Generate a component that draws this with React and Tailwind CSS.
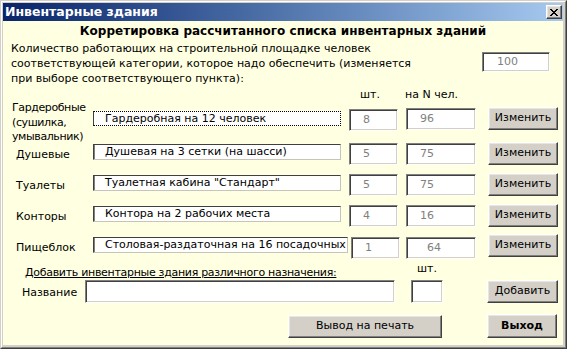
import React from "react";

const sunken =
  "bg-white border border-t-[#808080] border-l-[#808080] border-r-white border-b-white shadow-[inset_1px_1px_0_#404040,inset_-1px_-1px_0_#d4d0c8]";
const raised =
  "bg-[#d4d0c8] border border-t-white border-l-white border-r-[#404040] border-b-[#404040] shadow-[inset_-1px_-1px_0_#808080,inset_1px_1px_0_#e8e6e1] flex items-center justify-center text-black";
const combo =
  "bg-white border border-t-[#404040] border-l-[#404040] border-r-[#c8c4bc] border-b-[#c8c4bc] shadow-[inset_1px_0_0_#808080] flex items-center whitespace-nowrap overflow-hidden leading-[14px]";

function Num({ v, pl = "pl-[13px]" }) {
  return (
    <div className={`${sunken} w-full h-full flex items-center ${pl} text-[#808080]`}>{v}</div>
  );
}

function Row({ label, text, n, total, top, comboW = "w-[248px]", last }) {
  return (
    <div className={`flex items-start h-[23px] ${top}`}>
      <div className="w-[90px] pl-[13px] mt-[5px] leading-[15px] shrink-0">{label}</div>
      <div className={`${combo} ${comboW} h-[16px] mt-[2px] pl-[11px] shrink-0`}>{text}</div>
      <div className={`${last ? "ml-[3px] mt-[2px]" : "ml-[8px] mt-[1px]"} w-[49px] h-[22px] shrink-0`}>
        <Num v={n} />
      </div>
      <div className={`${last ? "ml-[6px] mt-[2px]" : "ml-[8px] mt-[1px]"} w-[70px] h-[22px] shrink-0`}>
        <Num v={total} pl={last ? "pl-[20px]" : "pl-[13px]"} />
      </div>
      <div className={`${raised} ${last ? "ml-[12px] -mt-[1px]" : "ml-[12px]"} w-[70px] h-[23px] shrink-0`}>Изменить</div>
    </div>
  );
}

export default function App() {
  return (
    <div className="w-[567px] h-[349px] bg-[#d4d0c8] border border-t-[#d4d0c8] border-l-[#d4d0c8] border-r-[#404040] border-b-[#404040] font-['DejaVu_Sans',Verdana,sans-serif] text-[11px] text-black">
      <div className="h-full border border-t-white border-l-white border-r-[#808080] border-b-[#808080] pt-[1px] pl-[1px] pr-[2px] pb-[2px] flex flex-col">
        {/* Title bar */}
        <div className="h-[18px] shrink-0 flex items-center bg-gradient-to-r from-[#0a246a] to-[#a6caf0] pl-[2px] pr-[1px]">
          <span className="text-white font-bold text-[12.5px] leading-[14px] flex-1">Инвентарные здания</span>
          <div className={`${raised} w-[16px] h-[14px]`}>
            <svg width="8" height="7" viewBox="0 0 8 7" shapeRendering="crispEdges">
              <g fill="#000">
                <rect x="0" y="0" width="2" height="1" />
                <rect x="6" y="0" width="2" height="1" />
                <rect x="1" y="1" width="2" height="1" />
                <rect x="5" y="1" width="2" height="1" />
                <rect x="2" y="2" width="4" height="1" />
                <rect x="3" y="3" width="2" height="1" />
                <rect x="2" y="4" width="4" height="1" />
                <rect x="1" y="5" width="2" height="1" />
                <rect x="5" y="5" width="2" height="1" />
                <rect x="0" y="6" width="2" height="1" />
                <rect x="6" y="6" width="2" height="1" />
              </g>
            </svg>
          </div>
        </div>

        {/* Body */}
        <div className="flex-1 bg-[#ffffe1] flex flex-col">
          <div className="h-[20px] flex items-center justify-center font-bold text-[12px]">
            Корретировка рассчитанного списка инвентарных зданий
          </div>

          <div className="flex items-start">
            <div className="w-[479px] pl-[8px] leading-[15px] shrink-0">
              Количество работающих на строительной площадке человек
              <br />
              соответствующей категории, которое надо обеспечить (изменяется
              <br />
              при выборе соответствующего пункта):
            </div>
            <div className={`${sunken} w-[68px] h-[20px] mt-[11px] flex items-center pl-[14px] text-[#808080]`}>100</div>
          </div>

          <div className="flex h-[12px] leading-[12px] mt-[3px] pl-[357px]">
            <span className="w-[45px]">шт.</span>
            <span>на N чел.</span>
          </div>

          {/* Row 1 */}
          <div className="flex items-start h-[41px]">
            <div className="w-[90px] pl-[9px] leading-[14.5px] tracking-[-0.4px] shrink-0">
              Гардеробные
              <br />
              (сушилка,
              <br />
              умывальник)
            </div>
            <div className="bg-white border border-dotted border-black [border-left-style:solid] border-l-[#404040] w-[248px] h-[15px] mt-[10px] pl-[11px] flex items-center whitespace-nowrap overflow-hidden leading-[13px] shrink-0">
              Гардеробная на 12 человек
            </div>
            <div className="ml-[8px] mt-[8px] w-[49px] h-[22px] shrink-0">
              <Num v="8" />
            </div>
            <div className="ml-[8px] mt-[7px] w-[70px] h-[22px] shrink-0">
              <Num v="96" />
            </div>
            <div className={`${raised} ml-[12px] mt-[6px] w-[70px] h-[23px] shrink-0`}>Изменить</div>
          </div>

          <Row label="Душевые" text="Душевая на 3 сетки (на шасси)" n="5" total="75" top="mt-0" />
          <Row label="Туалеты" text={'Туалетная кабина "Стандарт"'} n="5" total="75" top="mt-[8px]" />
          <Row label="Конторы" text="Контора на 2 рабочих места" n="4" total="16" top="mt-[8px]" />
          <Row
            label="Пищеблок"
            text="Столовая-раздаточная на 16 посадочных"
            n="1"
            total="64"
            top="mt-[8px]"
            comboW="w-[255px]"
            last
          />

          <div className="flex items-start h-[19px] mt-[3px]">
            <div className="w-[412px] pl-[22px] mt-[4px] leading-[15px] tracking-[-0.3px] shrink-0">
              <span className="underline">Добавить инвентарные здания различного назначения:</span>
            </div>
            <span className="ml-[2px] leading-[15px]">шт.</span>
          </div>

          <div className="flex items-start h-[23px]">
            <div className="w-[82px] pl-[19px] mt-[5px] leading-[15px] shrink-0">Название</div>
            <div className={`${sunken} w-[310px] h-[23px] shrink-0`} />
            <div className={`${sunken} ml-[16px] w-[32px] h-[23px] shrink-0`} />
            <div className={`${raised} ml-[44px] w-[71px] h-[23px] shrink-0`}>Добавить</div>
          </div>

          <div className="flex items-start h-[24px] mt-[11px]">
            <div className={`${raised} ml-[285px] mt-[1px] w-[154px] h-[23px] shrink-0`}>Вывод на печать</div>
            <div className={`${raised} ml-[45px] w-[70px] h-[24px] shrink-0 font-bold`}>Выход</div>
          </div>
        </div>
      </div>
    </div>
  );
}
